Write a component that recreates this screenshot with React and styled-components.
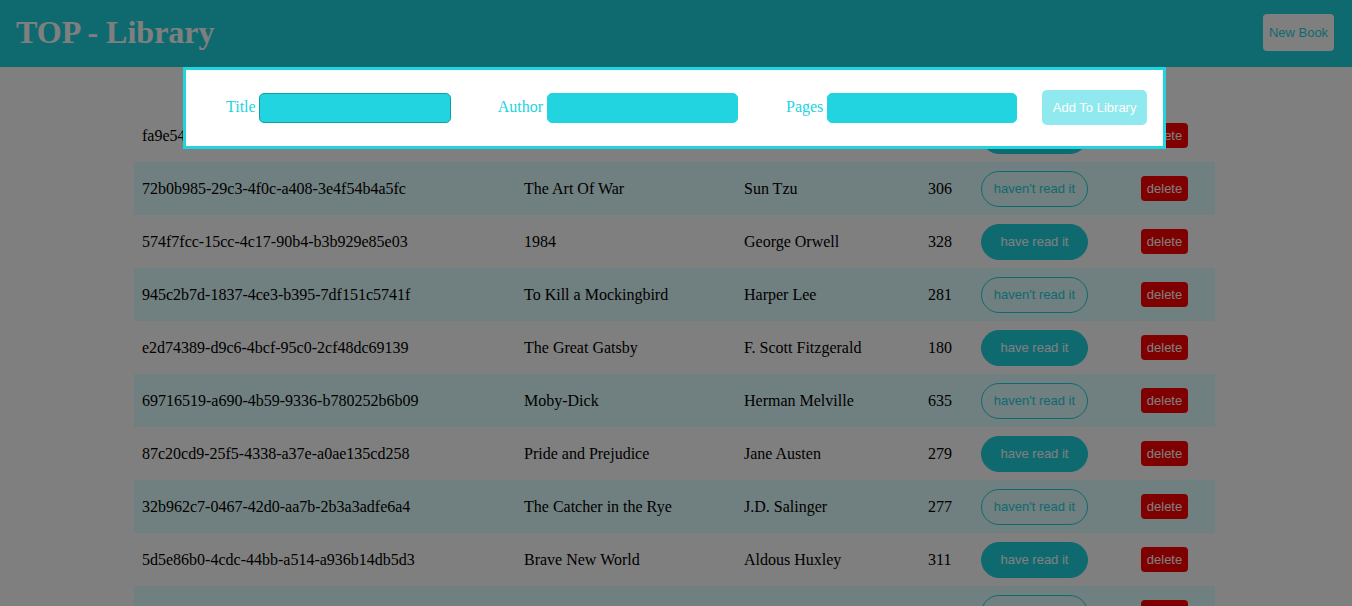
import styled, { createGlobalStyle } from 'styled-components';

const CYAN = '#1fd4e0';

const books = [
  { id: 'fa9e54d2-6b1a-4e0f-9c3d-1a2b3c4d5e6f', title: 'The Hobbit', author: 'J.R.R. Tolkien', pages: 295, read: true },
  { id: '72b0b985-29c3-4f0c-a408-3e4f54b4a5fc', title: 'The Art Of War', author: 'Sun Tzu', pages: 306, read: false },
  { id: '574f7fcc-15cc-4c17-90b4-b3b929e85e03', title: '1984', author: 'George Orwell', pages: 328, read: true },
  { id: '945c2b7d-1837-4ce3-b395-7df151c5741f', title: 'To Kill a Mockingbird', author: 'Harper Lee', pages: 281, read: false },
  { id: 'e2d74389-d9c6-4bcf-95c0-2cf48dc69139', title: 'The Great Gatsby', author: 'F. Scott Fitzgerald', pages: 180, read: true },
  { id: '69716519-a690-4b59-9336-b780252b6b09', title: 'Moby-Dick', author: 'Herman Melville', pages: 635, read: false },
  { id: '87c20cd9-25f5-4338-a37e-a0ae135cd258', title: 'Pride and Prejudice', author: 'Jane Austen', pages: 279, read: true },
  { id: '32b962c7-0467-42d0-aa7b-2b3a3adfe6a4', title: 'The Catcher in the Rye', author: 'J.D. Salinger', pages: 277, read: false },
  { id: '5d5e86b0-4cdc-44bb-a514-a936b14db5d3', title: 'Brave New World', author: 'Aldous Huxley', pages: 311, read: true },
  { id: 'b81f0a3e-7c21-4d9a-8e55-0f1d2c3b4a59', title: 'War and Peace', author: 'Leo Tolstoy', pages: 1225, read: false },
];

const GlobalStyle = createGlobalStyle`
  body {
    margin: 0;
    background: #fff;
    font-family: "Liberation Serif", "Times New Roman", serif;
    overflow: hidden;
  }
`;

const Header = styled.header`
  height: 67px;
  box-sizing: border-box;
  background: ${CYAN};
  display: flex;
  align-items: center;
  justify-content: space-between;
  padding: 0 18px 2px 16px;

  h1 {
    margin: 0;
    font-size: 32px;
    font-weight: bold;
    color: #fff;
  }
`;

const NewBookBtn = styled.button`
  width: 71px;
  height: 37px;
  border: none;
  border-radius: 4px;
  background: #fff;
  color: ${CYAN};
  font-family: "Liberation Sans", Arial, sans-serif;
  font-size: 13px;
  padding: 0;
`;

const Main = styled.main`
  padding: 42px 0 0 134px;
`;

const Table = styled.div`
  width: 1081px;
`;

const Row = styled.div`
  display: grid;
  grid-template-columns: 382px 220px 184px 53px 160px 82px;
  align-items: center;
  height: 53px;
  background: ${(p) => (p.$tinted ? '#e0ffff' : 'transparent')};
  font-size: 16px;
  color: #000;
`;

const Cell = styled.div`
  padding-left: 8px;
  white-space: nowrap;
`;

const ReadBtn = styled.button`
  width: 107px;
  height: 36px;
  border-radius: 18px;
  border: 1px solid ${CYAN};
  background: ${(p) => (p.$read ? CYAN : 'transparent')};
  color: ${(p) => (p.$read ? '#fff' : CYAN)};
  font-family: "Liberation Sans", Arial, sans-serif;
  font-size: 13px;
  padding: 0;
`;

const DeleteBtn = styled.button`
  width: 47px;
  height: 25px;
  border: none;
  border-radius: 4px;
  background: #ff0000;
  color: #fff;
  font-family: "Liberation Sans", Arial, sans-serif;
  font-size: 13px;
  padding: 0;
`;

const Overlay = styled.div`
  position: fixed;
  inset: 0;
  background: rgba(0, 0, 0, 0.5);
`;

const Modal = styled.form`
  position: fixed;
  top: 67px;
  left: 183px;
  width: 983px;
  height: 82px;
  box-sizing: border-box;
  border: 3px solid #21d4df;
  background: #fff;
  display: flex;
  align-items: center;
  padding: 0 16px 2px 40px;
`;

const Field = styled.label`
  display: flex;
  align-items: center;
  gap: ${(p) => p.$inner}px;
  margin-right: ${(p) => p.$gap}px;
  color: #21d4df;
  font-size: 16px;
  line-height: 16px;
`;

const Input = styled.input`
  width: ${(p) => p.$w}px;
  height: 30px;
  box-sizing: border-box;
  border: 1px solid ${(p) => (p.$focused ? '#139ea6' : '#21d4df')};
  border-radius: 5px;
  background: #21d4df;
  outline: none;
  margin: 2px 0 0;
`;

const AddBtn = styled.button`
  width: 106px;
  height: 35px;
  border: none;
  border-radius: 5px;
  background: #21d4df;
  opacity: 0.5;
  color: #fff;
  font-family: "Liberation Sans", Arial, sans-serif;
  font-size: 13px;
  padding: 0;
  margin-left: 1px;
`;

export default function App() {
  return (
    <>
      <GlobalStyle />
      <Header>
        <h1>TOP - Library</h1>
        <NewBookBtn type="button">New Book</NewBookBtn>
      </Header>
      <Main>
        <Table>
          {books.map((b, i) => (
            <Row key={b.id} $tinted={i % 2 === 1}>
              <Cell>{b.id}</Cell>
              <Cell>{b.title}</Cell>
              <Cell>{b.author}</Cell>
              <Cell>{b.pages}</Cell>
              <Cell>
                <ReadBtn type="button" $read={b.read}>
                  {b.read ? 'have read it' : "haven't read it"}
                </ReadBtn>
              </Cell>
              <Cell>
                <DeleteBtn type="button">delete</DeleteBtn>
              </Cell>
            </Row>
          ))}
        </Table>
      </Main>
      <Overlay />
      <Modal onSubmit={(e) => e.preventDefault()}>
        <Field $gap={47} $inner={3}>
          Title
          <Input $w={192} $focused />
        </Field>
        <Field $gap={48} $inner={4}>
          Author
          <Input $w={191} />
        </Field>
        <Field $gap={24} $inner={4}>
          Pages
          <Input $w={190} />
        </Field>
        <AddBtn type="submit">Add To Library</AddBtn>
      </Modal>
    </>
  );
}
